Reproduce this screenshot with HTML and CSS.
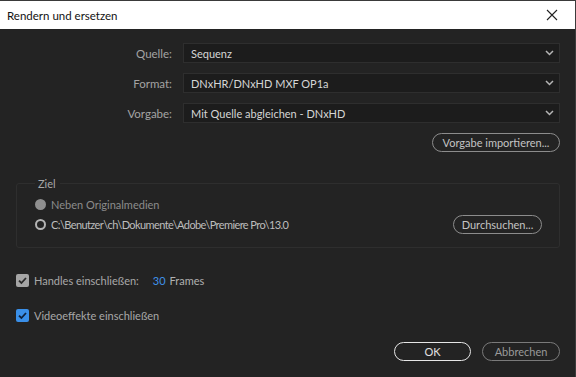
FILE: index.html
```html
<!DOCTYPE html>
<html lang="de">
<head>
<meta charset="utf-8">
<link rel="stylesheet" href="styles.css">
</head>
<body>
<div class="dialog">
  <div class="titlebar">
    <span class="title">Rendern und ersetzen</span>
    <svg class="close" width="12" height="12" viewBox="0 0 12 12"><path d="M1 1L11 11M11 1L1 11" stroke="#222" stroke-width="1.1" fill="none"/></svg>
  </div>
  <div class="content">
    <div class="form">
      <label class="lbl">Quelle:</label>
      <div class="select"><span>Sequenz</span><svg class="chev" width="9" height="6" viewBox="0 0 9 6"><path d="M1 1L4.5 4.5L8 1" stroke="#b5b5b5" stroke-width="1.5" fill="none"/></svg></div>
      <label class="lbl">Format:</label>
      <div class="select"><span>DNxHR/DNxHD MXF OP1a</span><svg class="chev" width="9" height="6" viewBox="0 0 9 6"><path d="M1 1L4.5 4.5L8 1" stroke="#b5b5b5" stroke-width="1.5" fill="none"/></svg></div>
      <label class="lbl">Vorgabe:</label>
      <div class="select"><span>Mit Quelle abgleichen - DNxHD</span><svg class="chev" width="9" height="6" viewBox="0 0 9 6"><path d="M1 1L4.5 4.5L8 1" stroke="#b5b5b5" stroke-width="1.5" fill="none"/></svg></div>
    </div>
    <div class="row-right">
      <button class="btn btn-import">Vorgabe importieren...</button>
    </div>
    <fieldset class="ziel">
      <legend>Ziel</legend>
      <div class="radio-row disabled">
        <span class="radio filled"></span><span>Neben Originalmedien</span>
      </div>
      <div class="radio-row">
        <span class="radio"></span><span class="path">C:\Benutzer\ch\Dokumente\Adobe\Premiere Pro\13.0</span>
        <button class="btn btn-browse">Durchsuchen...</button>
      </div>
    </fieldset>
    <div class="check-row handles">
      <span class="cb gray"><svg width="13" height="13" viewBox="0 0 13 13"><path d="M3 6.6L5.4 9L10 4" stroke="#2a2a2a" stroke-width="1.8" fill="none"/></svg></span>
      <span class="cb-label">Handles einschließen:</span>
      <span class="num">30</span>
      <span class="frames">Frames</span>
    </div>
    <div class="check-row">
      <span class="cb blue"><svg width="13" height="13" viewBox="0 0 13 13"><path d="M3 6.6L5.4 9L10 4" stroke="#10213a" stroke-width="1.8" fill="none"/></svg></span>
      <span class="cb-label">Videoeffekte einschließen</span>
    </div>
    <div class="footer">
      <button class="btn btn-ok">OK</button>
      <button class="btn btn-cancel">Abbrechen</button>
    </div>
  </div>
</div>
</body>
</html>
```
FILE: styles.css
```css
html, body {
  margin: 0;
  padding: 0;
  background: #232323;
}
.dialog {
  width: 576px;
  height: 377px;
  background: #232323;
  font-family: "Lato", "Open Sans", sans-serif;
  font-size: 11px;
  box-sizing: border-box;
  border-top: 1px solid #3a3a3a;
  border-right: 1px solid #3c3c3c;
  overflow: hidden;
}
.titlebar {
  height: 28px;
  background: #ffffff;
  display: flex;
  align-items: center;
  justify-content: space-between;
  padding: 0 17px 0 7px;
  font-family: "Lato", "Noto Sans", sans-serif;
  font-size: 11.5px;
  color: #111;
}
.close {
  display: block;
}
.content {
  padding: 14px 15px 0 16px;
}
.form {
  display: grid;
  grid-template-columns: 156px 1fr;
  column-gap: 11px;
  row-gap: 10px;
  align-items: center;
}
.lbl {
  text-align: right;
  color: #a4a4a4;
  font-size: 11.5px;
}
.select {
  height: 20px;
  box-sizing: border-box;
  background: #1c1c1c;
  border: 1px solid #2e2e2e;
  display: flex;
  align-items: center;
  justify-content: space-between;
  padding: 0 5px 0 7px;
  color: #d6d6d6;
}
.chev {
  display: block;
}
.row-right {
  display: flex;
  justify-content: flex-end;
  margin-top: 10px;
}
.btn {
  font-family: "Lato", "Open Sans", sans-serif;
  font-size: 11px;
  background: transparent;
  border: 1.5px solid #8c8c8c;
  border-radius: 10px;
  color: #c4c4c4;
  height: 19px;
  padding: 0 4px;
  line-height: 1;
  box-sizing: border-box;
  margin: 0;
  white-space: nowrap;
}
.btn-import {
  width: 128px;
}
.ziel {
  margin: 25px 0 0 0;
  border: 1px solid #2e2e2e;
  border-radius: 3px;
  padding: 4px 17px 15px 18px;
  height: 71px;
  box-sizing: border-box;
}
.ziel legend {
  color: #a8a8a8;
  padding: 0 4px 0 3px;
  margin-left: 0;
}
.radio-row {
  display: flex;
  align-items: center;
  gap: 5px;
  height: 20px;
  color: #bdbdbd;
}
.radio-row.disabled {
  color: #8c8c8c;
}
.radio {
  width: 11px;
  height: 11px;
  border-radius: 50%;
  box-sizing: border-box;
  border: 2px solid #b4b4b4;
  flex: none;
}
.radio.filled {
  background: #8f8f8f;
  border-color: #8f8f8f;
}
.path {
  flex: 1;
  letter-spacing: -0.6px;
}
.btn-browse {
  width: 89px;
}
.check-row {
  display: flex;
  align-items: center;
  height: 14px;
  color: #a8a8a8;
}
.check-row.handles {
  margin-top: 25px;
}
.check-row + .check-row {
  margin-top: 21px;
}
.cb {
  width: 13px;
  height: 13px;
  border-radius: 2px;
  margin-right: 5px;
  flex: none;
}
.cb svg {
  display: block;
}
.cb.gray {
  background: #a5a5a5;
}
.cb.blue {
  background: #3a8fe8;
}
.cb-label {
  font-size: 11px;
}
.num {
  color: #3f92ea;
  margin-left: 14px;
  margin-right: 4px;
}
.frames {
  color: #b0b0b0;
}
.footer {
  display: flex;
  justify-content: flex-end;
  gap: 11px;
  margin-top: 20px;
}
.btn-ok {
  width: 77px;
  border-color: #e6e6e6;
  color: #e0e0e0;
}
.btn-cancel {
  width: 78px;
  border-color: #7a7a7a;
  color: #9a9a9a;
}
```
